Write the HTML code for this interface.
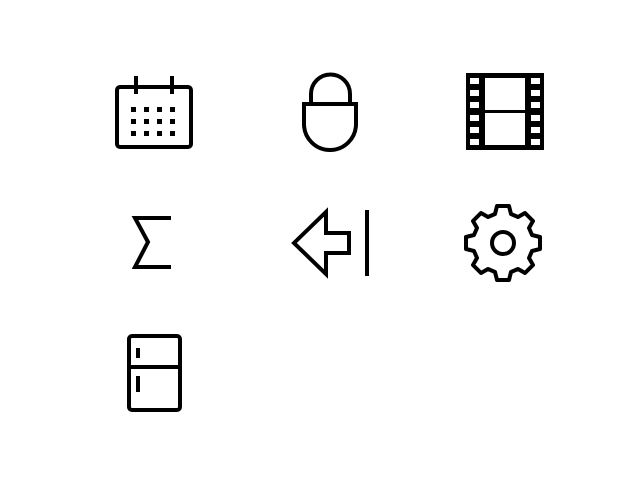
<!DOCTYPE html>
<html><head><style>html,body{margin:0;background:#fff;width:640px;height:480px;overflow:hidden}</style></head>
<body>
<svg width="640" height="480" viewBox="0 0 640 480" xmlns="http://www.w3.org/2000/svg" fill="none" stroke="#000" stroke-width="4">
<!-- calendar -->
<rect x="117" y="87" width="74" height="60" rx="3"/>
<path d="M136 76v18M172 76v18"/>
<g fill="#000" stroke="none">
<rect x="131" y="107" width="5" height="5"/><rect x="144" y="107" width="5" height="5"/><rect x="157" y="107" width="5" height="5"/><rect x="170" y="107" width="5" height="5"/>
<rect x="131" y="119" width="5" height="5"/><rect x="144" y="119" width="5" height="5"/><rect x="157" y="119" width="5" height="5"/><rect x="170" y="119" width="5" height="5"/>
<rect x="131" y="131" width="5" height="5"/><rect x="144" y="131" width="5" height="5"/><rect x="157" y="131" width="5" height="5"/><rect x="170" y="131" width="5" height="5"/>
</g>
<!-- lock -->
<path d="M311 104V94a19 19 0 0 1 39 0v10"/>
<path d="M304 104h52v20a26 26 0 0 1-52 0z"/>
<!-- film -->
<rect x="466" y="73" width="78" height="77" fill="#000" stroke="none"/>
<rect x="485" y="78" width="40" height="32" fill="#fff" stroke="none"/>
<rect x="485" y="113" width="40" height="32" fill="#fff" stroke="none"/>
<g fill="#fff" stroke="none">
<rect x="470" y="78" width="9" height="6"/><rect x="470" y="90" width="9" height="6"/><rect x="470" y="102" width="9" height="6"/><rect x="470" y="115" width="9" height="6"/><rect x="470" y="127" width="9" height="6"/><rect x="470" y="139" width="9" height="6"/>
<rect x="531" y="78" width="9" height="6"/><rect x="531" y="90" width="9" height="6"/><rect x="531" y="102" width="9" height="6"/><rect x="531" y="115" width="9" height="6"/><rect x="531" y="127" width="9" height="6"/><rect x="531" y="139" width="9" height="6"/>
</g>
<!-- sigma -->
<path d="M171 218h-36l13 24-13 25h36" stroke-linejoin="miter"/>
<!-- arrow -->
<path d="M294 243l32-31v21h23v20h-23v21z" stroke-linejoin="miter"/>
<path d="M367 210v66"/>
<!-- gear -->
<g transform="translate(503 243)">
<path d="M-6 -37h12l2 8 7 3 7-4 8 8-4 7 3 7 8 2v12l-8 2-3 7 4 7-8 8-7-4-7 3-2 8h-12l-2-8-7-3-7 4-8-8 4-7-3-7-8-2v-12l8-2 3-7-4-7 8-8 7 4 7-3z" stroke-linejoin="round"/>
<circle r="11"/>
</g>
<!-- fridge -->
<rect x="129" y="336" width="51" height="74" rx="3"/>
<path d="M129 367h51"/>
<path d="M138 348v10M138 376v16" stroke-width="4"/>
</svg>
</body></html>
